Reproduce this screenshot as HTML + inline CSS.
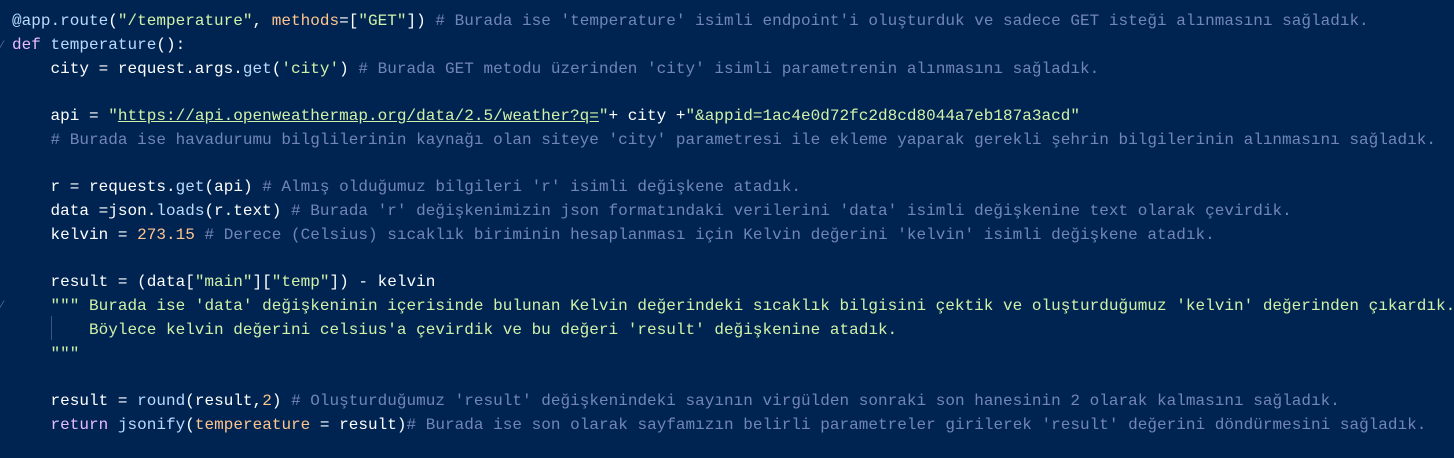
<!DOCTYPE html><html><head><meta charset="utf-8"><style>
body{margin:0;background:#002451;width:1454px;height:458px;overflow:hidden}
pre{margin:0;position:absolute;left:12px;top:10px;font-family:"Liberation Mono",monospace;font-size:16px;line-height:23.75px;color:#fff;white-space:pre;letter-spacing:0.02px}
.s{color:#d1f1a9}.o{color:#ffc58f}.k{color:#ebbbff}.c{color:#7285b7}.f{color:#bbdaff}.u{text-decoration:underline}
.g{position:absolute;left:51px;top:316px;width:1px;height:24px;background:#3a5580}
.m{position:absolute;left:1px;font:12px "Liberation Sans",sans-serif;color:#5a6f99}
</style></head><body><div class="g"></div><div class="m" style="top:38px">⁄</div><div class="m" style="top:298px">⁄</div><pre><span class="f">@app.route</span>(<span class="s">"/temperature"</span>, <span class="o">methods</span>=[<span class="s">"GET"</span>]) <span class="c"># Burada ise 'temperature' isimli endpoint'i oluşturduk ve sadece GET isteği alınmasını sağladık.</span>
<span class="k">def</span> <span class="f">temperature</span>():
    city = request.args.<span class="f">get</span>(<span class="s">'city'</span>) <span class="c"># Burada GET metodu üzerinden 'city' isimli parametrenin alınmasını sağladık.</span>

    api = <span class="s">"<span class="u">https://api.openweathermap.org/data/2.5/weather?q=</span>"</span>+ city +<span class="s">"&amp;appid=1ac4e0d72fc2d8cd8044a7eb187a3acd"</span>
    <span class="c"># Burada ise havadurumu bilglilerinin kaynağı olan siteye 'city' parametresi ile ekleme yaparak gerekli şehrin bilgilerinin alınmasını sağladık.</span>

    r = requests.<span class="f">get</span>(api) <span class="c"># Almış olduğumuz bilgileri 'r' isimli değişkene atadık.</span>
    data =json.<span class="f">loads</span>(r.text) <span class="c"># Burada 'r' değişkenimizin json formatındaki verilerini 'data' isimli değişkenine text olarak çevirdik.</span>
    kelvin = <span class="o">273.15</span> <span class="c"># Derece (Celsius) sıcaklık biriminin hesaplanması için Kelvin değerini 'kelvin' isimli değişkene atadık.</span>

    result = (data[<span class="s">"main"</span>][<span class="s">"temp"</span>]) - kelvin
    <span class="s">""" Burada ise 'data' değişkeninin içerisinde bulunan Kelvin değerindeki sıcaklık bilgisini çektik ve oluşturduğumuz 'kelvin' değerinden çıkardık.
        Böylece kelvin değerini celsius'a çevirdik ve bu değeri 'result' değişkenine atadık.
    """</span>

    result = <span class="f">round</span>(result,<span class="o">2</span>) <span class="c"># Oluşturduğumuz 'result' değişkenindeki sayının virgülden sonraki son hanesinin 2 olarak kalmasını sağladık.</span>
    <span class="k">return</span> <span class="f">jsonify</span>(<span class="o">tempereature</span> = result)<span class="c"># Burada ise son olarak sayfamızın belirli parametreler girilerek 'result' değerini döndürmesini sağladık.</span></pre></body></html>
